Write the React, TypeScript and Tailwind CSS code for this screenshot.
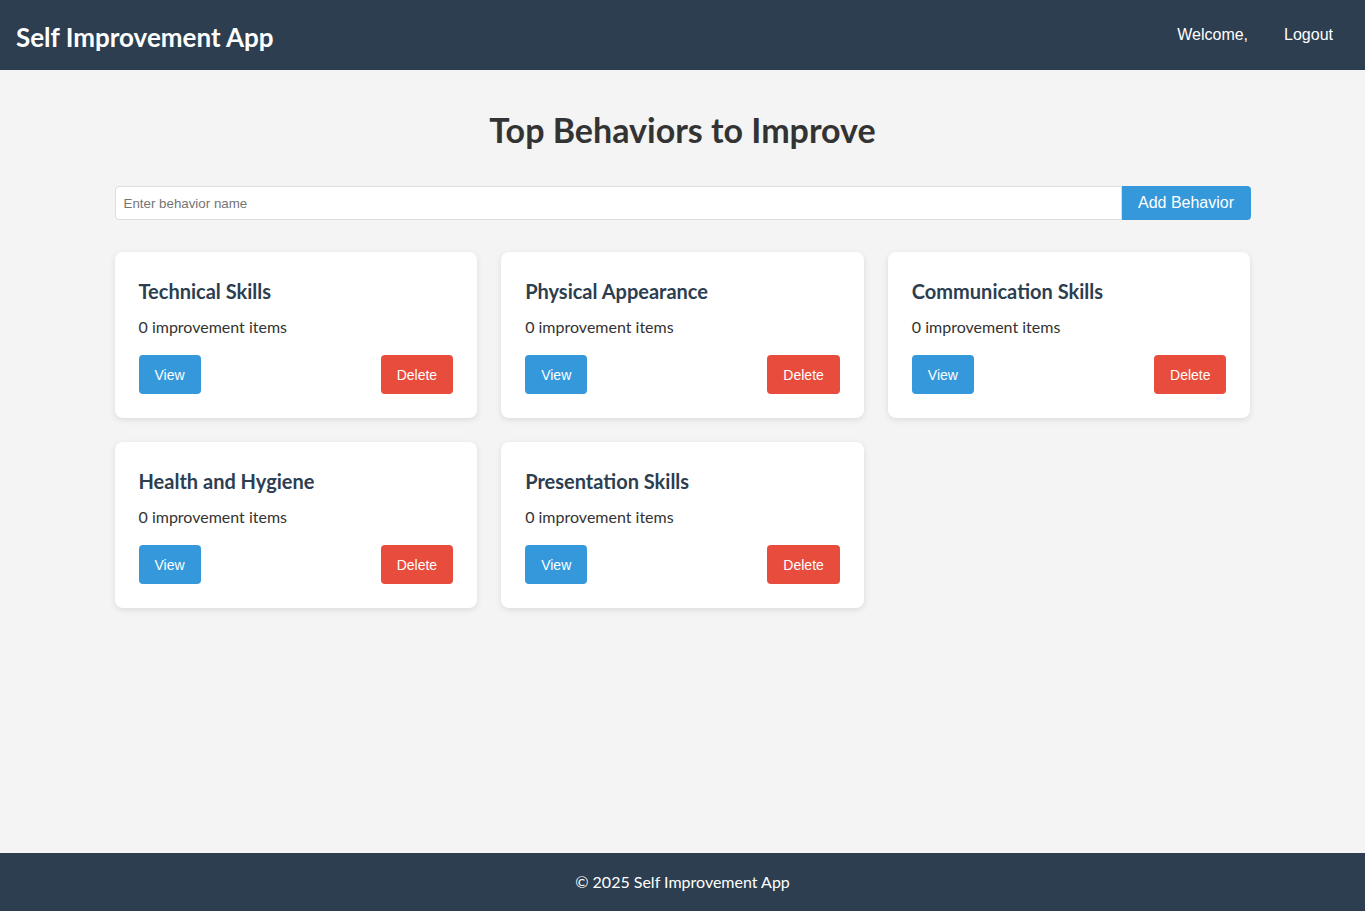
import { useState } from "react";

const behaviors = [
  "Technical Skills",
  "Physical Appearance",
  "Communication Skills",
  "Health and Hygiene",
  "Presentation Skills",
];

const sans = "font-['Lato','Open_Sans',sans-serif]";
const arial = "font-['Liberation_Sans',Arial,sans-serif]";

function BehaviorCard({ name, onDelete }: { name: string; onDelete: () => void }) {
  return (
    <div className="rounded-lg bg-white p-6 shadow-[0_2px_6px_rgba(0,0,0,0.1)]">
      <h3 className={`${sans} text-[20px] font-bold leading-[30px] text-[#2c3e50]`}>{name}</h3>
      <p className={`${sans} mt-[10px] text-base leading-[22px] text-[#333]`}>0 improvement items</p>
      <div className="mt-[17px] flex items-center justify-between">
        <button className={`${arial} h-[39px] rounded bg-[#3498db] px-4 text-sm text-white`}>View</button>
        <button
          onClick={onDelete}
          className={`${arial} h-[39px] rounded bg-[#e74c3c] px-4 text-sm text-white`}
        >
          Delete
        </button>
      </div>
    </div>
  );
}

export default function App() {
  const [items, setItems] = useState(behaviors);
  const [draft, setDraft] = useState("");

  return (
    <div className="flex min-h-screen flex-col bg-[#f4f4f4]">
      <header className="flex h-[70px] items-center justify-between bg-[#2c3e50] pl-4 pr-8 text-white">
        <h1 className={`${sans} pt-[3px] text-[26px] font-bold leading-[34px]`}>Self Improvement App</h1>
        <nav className={`${arial} flex items-center gap-9 text-base`}>
          <span>Welcome,</span>
          <button>Logout</button>
        </nav>
      </header>

      <main className="flex-grow">
        <div className="mx-auto max-w-[1200px] px-8 pt-[40px]">
          <h2 className={`${sans} text-center text-[34px] font-bold leading-[40px] text-[#333]`}>
            Top Behaviors to Improve
          </h2>

          <div className="mt-[36px] flex">
            <input
              value={draft}
              onChange={(e) => setDraft(e.target.value)}
              placeholder="Enter behavior name"
              className={`${arial} h-[34px] flex-1 rounded-l border border-[#ddd] bg-white px-2 text-[13.33px] text-[#333] placeholder:text-[#757575] outline-none`}
            />
            <button
              onClick={() => {
                if (draft.trim()) {
                  setItems([...items, draft.trim()]);
                  setDraft("");
                }
              }}
              className={`${arial} h-[34px] w-[129px] rounded-r bg-[#3498db] text-base text-white`}
            >
              Add Behavior
            </button>
          </div>

          <div className="mt-8 grid grid-cols-3 gap-6">
            {items.map((b, i) => (
              <BehaviorCard key={b + i} name={b} onDelete={() => setItems(items.filter((_, j) => j !== i))} />
            ))}
          </div>
        </div>
      </main>

      <footer className={`${sans} flex h-[58px] items-center justify-center bg-[#2c3e50] text-base text-white`}>
        © 2025 Self Improvement App
      </footer>
    </div>
  );
}
